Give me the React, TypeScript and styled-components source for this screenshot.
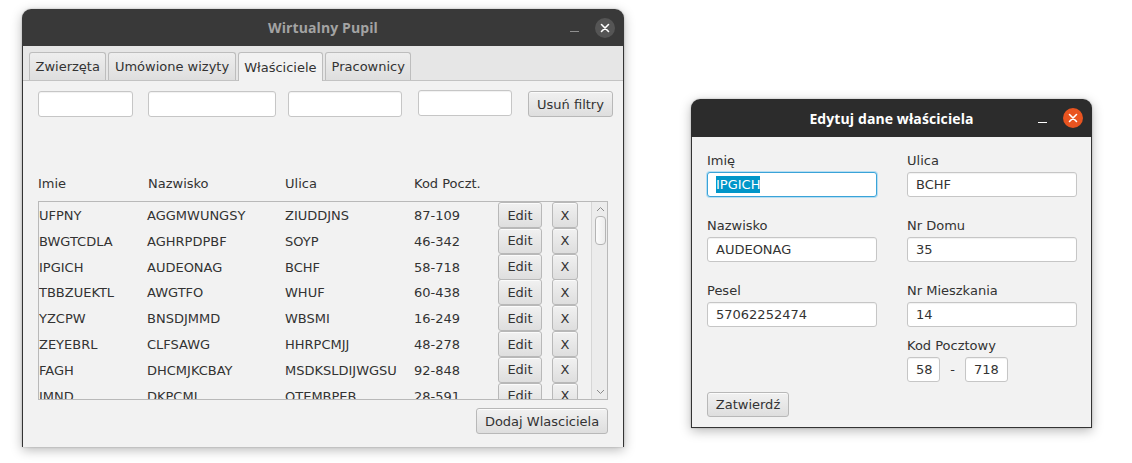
import React from "react";
import styled, { createGlobalStyle } from "styled-components";

const GlobalStyle = createGlobalStyle`
  html, body { margin: 0; padding: 0; background: #ffffff; }
  body {
    font-family: "DejaVu Sans", "Liberation Sans", sans-serif;
    font-size: 13px;
    color: #333333;
  }
  * { box-sizing: border-box; }
`;

const Stage = styled.div`
  display: flex;
  align-items: flex-start;
  width: 1132px;
  height: 463px;
  padding: 9px 0 0 22px;
  overflow: hidden;
`;

const Window = styled.div<{ $w: number; $h: number; $ml?: number; $mt?: number }>`
  width: ${(p) => p.$w}px;
  height: ${(p) => p.$h}px;
  margin-left: ${(p) => p.$ml ?? 0}px;
  margin-top: ${(p) => p.$mt ?? 0}px;
  display: flex;
  flex-direction: column;
  flex: none;
  border-radius: 9px 9px 0 0;
  box-shadow: 0 3px 12px rgba(0, 0, 0, 0.28), 0 0 2px rgba(0, 0, 0, 0.25);
  overflow: hidden;
`;

const TitleBar = styled.div<{ $h: number; $bg: string }>`
  height: ${(p) => p.$h}px;
  flex: none;
  background: ${(p) => p.$bg};
  display: grid;
  grid-template-columns: 1fr auto 1fr;
  align-items: center;
`;

const Title = styled.div<{ $color: string }>`
  grid-column: 2;
  font-family: "Open Sans", "Noto Sans", sans-serif;
  font-weight: 700;
  font-size: 14px;
  letter-spacing: 0.1px;
  color: ${(p) => p.$color};
`;

const Controls = styled.div`
  grid-column: 3;
  justify-self: end;
  display: flex;
  align-items: center;
  gap: 16px;
  padding-right: 9px;
`;

const MinButton = styled.div<{ $c?: string }>`
  width: 9px;
  height: 1px;
  margin-top: 8px;
  background: ${(p) => p.$c ?? "#a0a0a0"};
`;

const CloseButton = styled.div<{ $bg: string }>`
  width: 20px;
  height: 20px;
  border-radius: 50%;
  background: ${(p) => p.$bg};
  display: flex;
  align-items: center;
  justify-content: center;
`;

const WindowBody = styled.div`
  flex: 1;
  background: #f2f2f2;
  border: 1px solid #343434;
  border-top: none;
  display: flex;
  flex-direction: column;
`;

const TabHeader = styled.div`
  display: flex;
  align-items: flex-end;
  gap: 2px;
  padding: 6px 6px 0;
  height: 35px;
  background: #e6e6e6;
  border-bottom: 1px solid #c3c3c3;
`;

const Tab = styled.div<{ $active?: boolean }>`
  height: ${(p) => (p.$active ? 29 : 28)}px;
  margin-bottom: ${(p) => (p.$active ? -1 : 0)}px;
  padding: 0 5.5px;
  display: flex;
  align-items: center;
  border: 1px solid #bdbdbd;
  border-bottom: none;
  border-radius: 3px 3px 0 0;
  background: ${(p) =>
    p.$active ? "#f2f2f2" : "linear-gradient(#eeeeee, #dedede)"};
  color: #333;
  white-space: nowrap;
`;

const Content = styled.div`
  flex: 1;
  display: flex;
  flex-direction: column;
  padding: 9px 15px 14px 15px;
`;

const FilterRow = styled.div`
  display: flex;
  align-items: flex-start;
  height: 27px;
`;

const TextField = styled.div<{ $w: number; $h?: number; $ml?: number; $mt?: number; $focus?: boolean }>`
  width: ${(p) => p.$w}px;
  height: ${(p) => p.$h ?? 26}px;
  margin-left: ${(p) => p.$ml ?? 0}px;
  margin-top: ${(p) => p.$mt ?? 0}px;
  flex: none;
  background: #ffffff;
  border: 1px solid ${(p) => (p.$focus ? "#3aa3d8" : "#c6c6c6")};
  border-radius: 3px;
  box-shadow: ${(p) =>
    p.$focus
      ? "0 0 0 1px #b7def2, inset 0 0 0 1px #ffffff"
      : "inset 0 1px 1px rgba(0,0,0,0.06)"};
  display: flex;
  align-items: center;
  padding: 0 8px;
  white-space: nowrap;
  color: #333;
`;

const Selected = styled.span`
  background: #0096c9;
  color: #ffffff;
  padding: 1px 0;
`;

const Button = styled.div<{ $w: number; $h?: number; $ml?: number; $mt?: number }>`
  width: ${(p) => p.$w}px;
  height: ${(p) => p.$h ?? 26}px;
  margin-left: ${(p) => p.$ml ?? 0}px;
  margin-top: ${(p) => p.$mt ?? 0}px;
  flex: none;
  display: flex;
  align-items: center;
  justify-content: center;
  border: 1px solid #b8b8b8;
  border-radius: 3px;
  background: linear-gradient(#f1f1f1, #dedede);
  box-shadow: inset 0 1px 0 rgba(255, 255, 255, 0.7);
  color: #333;
  white-space: nowrap;
`;

const HeaderRow = styled.div`
  display: grid;
  grid-template-columns: 110px 137px 129px 84px;
  align-items: center;
  margin-top: 58px;
  height: 16px;
`;

const HeaderCell = styled.div`
  color: #333;
  white-space: nowrap;
`;

const ListBox = styled.div`
  margin-top: 10px;
  height: 199px;
  border: 1px solid #b9b9b9;
  background: #f2f2f2;
  display: flex;
  overflow: hidden;
`;

const Rows = styled.div`
  flex: 1;
  overflow: hidden;
`;

const Row = styled.div`
  display: grid;
  grid-template-columns: 108px 138px 129px 84px 44px 10px 26px;
  align-items: center;
  height: 25.83px;
`;

const Cell = styled.div`
  white-space: nowrap;
  color: #333;
  padding-top: 1px;
`;

const RowButton = styled(Button)<{ $col: number }>`
  grid-column: ${(p) => p.$col};
  height: 26px;
`;

const ScrollTrack = styled.div`
  width: 17px;
  flex: none;
  margin-right: -1px;
  margin-left: 12px;
  background: #ececec;
  border-left: 1px solid #d6d6d6;
  display: flex;
  flex-direction: column;
  align-items: center;
`;

const ArrowBox = styled.div`
  height: 14px;
  width: 100%;
  display: flex;
  align-items: center;
  justify-content: center;
`;

const Thumb = styled.div`
  width: 11px;
  height: 29px;
  border: 1px solid #b4b4b4;
  border-radius: 4px;
  background: linear-gradient(90deg, #fbfbfb, #ededed);
`;

const Spacer = styled.div`
  flex: 1;
`;

const Footer = styled.div`
  display: flex;
  justify-content: flex-end;
  margin-top: 8px;
`;

/* dialog */
const DialogBody = styled.div`
  flex: 1;
  background: #f2f2f2;
  border: 1px solid #343434;
  border-top: none;
  padding: 15px 15px 0 15px;
  display: flex;
  flex-direction: column;
`;

const FormGrid = styled.div`
  display: grid;
  grid-template-columns: 170px 170px;
  column-gap: 30px;
  row-gap: 20px;
`;

const Field = styled.div`
  display: flex;
  flex-direction: column;
`;

const Label = styled.div`
  height: 16px;
  line-height: 18px;
  margin-bottom: 4px;
  color: #333;
  white-space: nowrap;
`;

const PostalRow = styled.div`
  display: flex;
  align-items: center;
`;

const Dash = styled.div`
  width: 25px;
  text-align: center;
  color: #333;
`;

const PostalField = styled(Field)`
  margin-left: 200px;
  margin-top: 10px;
`;

const Chevron = ({ up }: { up?: boolean }) => (
  <svg width="9" height="6" viewBox="0 0 9 6">
    <polyline
      points={up ? "1,5 4.5,1.5 8,5" : "1,1 4.5,4.5 8,1"}
      fill="none"
      stroke="#8a8a8a"
      strokeWidth="1"
    />
  </svg>
);

const XIcon = () => (
  <svg width="10" height="10" viewBox="0 0 10 10">
    <path d="M1.5 1.5 L8.5 8.5 M8.5 1.5 L1.5 8.5" stroke="#ffffff" strokeWidth="1.6" strokeLinecap="round" />
  </svg>
);

const rows = [
  ["UFPNY", "AGGMWUNGSY", "ZIUDDJNS", "87-109"],
  ["BWGTCDLA", "AGHRPDPBF", "SOYP", "46-342"],
  ["IPGICH", "AUDEONAG", "BCHF", "58-718"],
  ["TBBZUEKTL", "AWGTFO", "WHUF", "60-438"],
  ["YZCPW", "BNSDJMMD", "WBSMI", "16-249"],
  ["ZEYEBRL", "CLFSAWG", "HHRPCMJJ", "48-278"],
  ["FAGH", "DHCMJKCBAY", "MSDKSLDIJWGSU", "92-848"],
  ["IMND", "DKPCML", "OTEMBPEB", "28-591"],
];

export default function App() {
  return (
    <>
      <GlobalStyle />
      <Stage>
        <Window $w={602} $h={438}>
          <TitleBar $h={37} $bg="#393939">
            <Title $color="#a3a3a3">Wirtualny Pupil</Title>
            <Controls>
              <MinButton $c="#8f8f8f" />
              <CloseButton $bg="#555555">
                <XIcon />
              </CloseButton>
            </Controls>
          </TitleBar>
          <WindowBody>
            <TabHeader>
              <Tab>Zwierzęta</Tab>
              <Tab>Umówione wizyty</Tab>
              <Tab $active>Właściciele</Tab>
              <Tab>Pracownicy</Tab>
            </TabHeader>
            <Content>
              <FilterRow>
                <TextField $w={95} $mt={1} />
                <TextField $w={128} $ml={15} $mt={1} />
                <TextField $w={114} $ml={12} $mt={1} />
                <TextField $w={94} $ml={16} />
                <Button $w={85} $ml={16} $mt={1}>Usuń filtry</Button>
              </FilterRow>
              <HeaderRow>
                <HeaderCell>Imie</HeaderCell>
                <HeaderCell>Nazwisko</HeaderCell>
                <HeaderCell>Ulica</HeaderCell>
                <HeaderCell>Kod Poczt.</HeaderCell>
              </HeaderRow>
              <ListBox>
                <Rows>
                  {rows.map((r, i) => (
                    <Row key={i}>
                      <Cell>{r[0]}</Cell>
                      <Cell>{r[1]}</Cell>
                      <Cell>{r[2]}</Cell>
                      <Cell>{r[3]}</Cell>
                      <RowButton $w={44} $col={5}>Edit</RowButton>
                      <RowButton $w={26} $col={7}>X</RowButton>
                    </Row>
                  ))}
                </Rows>
                <ScrollTrack>
                  <ArrowBox>
                    <Chevron up />
                  </ArrowBox>
                  <Thumb />
                  <Spacer />
                  <ArrowBox>
                    <Chevron />
                  </ArrowBox>
                </ScrollTrack>
              </ListBox>
              <Footer>
                <Button $w={132} $h={26}>Dodaj Wlasciciela</Button>
              </Footer>
            </Content>
          </WindowBody>
        </Window>

        <Window $w={401} $h={329} $ml={67} $mt={90}>
          <TitleBar $h={38} $bg="#2c2c2c">
            <Title $color="#ffffff">Edytuj dane właściciela</Title>
            <Controls>
              <MinButton $c="#ffffff" />
              <CloseButton $bg="#e95420">
                <XIcon />
              </CloseButton>
            </Controls>
          </TitleBar>
          <DialogBody>
            <FormGrid>
              <Field>
                <Label>Imię</Label>
                <TextField $w={170} $h={25} $focus>
                  <Selected>IPGICH</Selected>
                </TextField>
              </Field>
              <Field>
                <Label>Ulica</Label>
                <TextField $w={170} $h={25}>BCHF</TextField>
              </Field>
              <Field>
                <Label>Nazwisko</Label>
                <TextField $w={170} $h={25}>AUDEONAG</TextField>
              </Field>
              <Field>
                <Label>Nr Domu</Label>
                <TextField $w={170} $h={25}>35</TextField>
              </Field>
              <Field>
                <Label>Pesel</Label>
                <TextField $w={170} $h={25}>57062252474</TextField>
              </Field>
              <Field>
                <Label>Nr Mieszkania</Label>
                <TextField $w={170} $h={25}>14</TextField>
              </Field>
            </FormGrid>
            <PostalField>
              <Label>Kod Pocztowy</Label>
              <PostalRow>
                <TextField $w={33} $h={25}>58</TextField>
                <Dash>-</Dash>
                <TextField $w={43} $h={25}>718</TextField>
              </PostalRow>
            </PostalField>
            <Button $w={82} $h={25} $mt={10}>Zatwierdź</Button>
          </DialogBody>
        </Window>
      </Stage>
    </>
  );
}
